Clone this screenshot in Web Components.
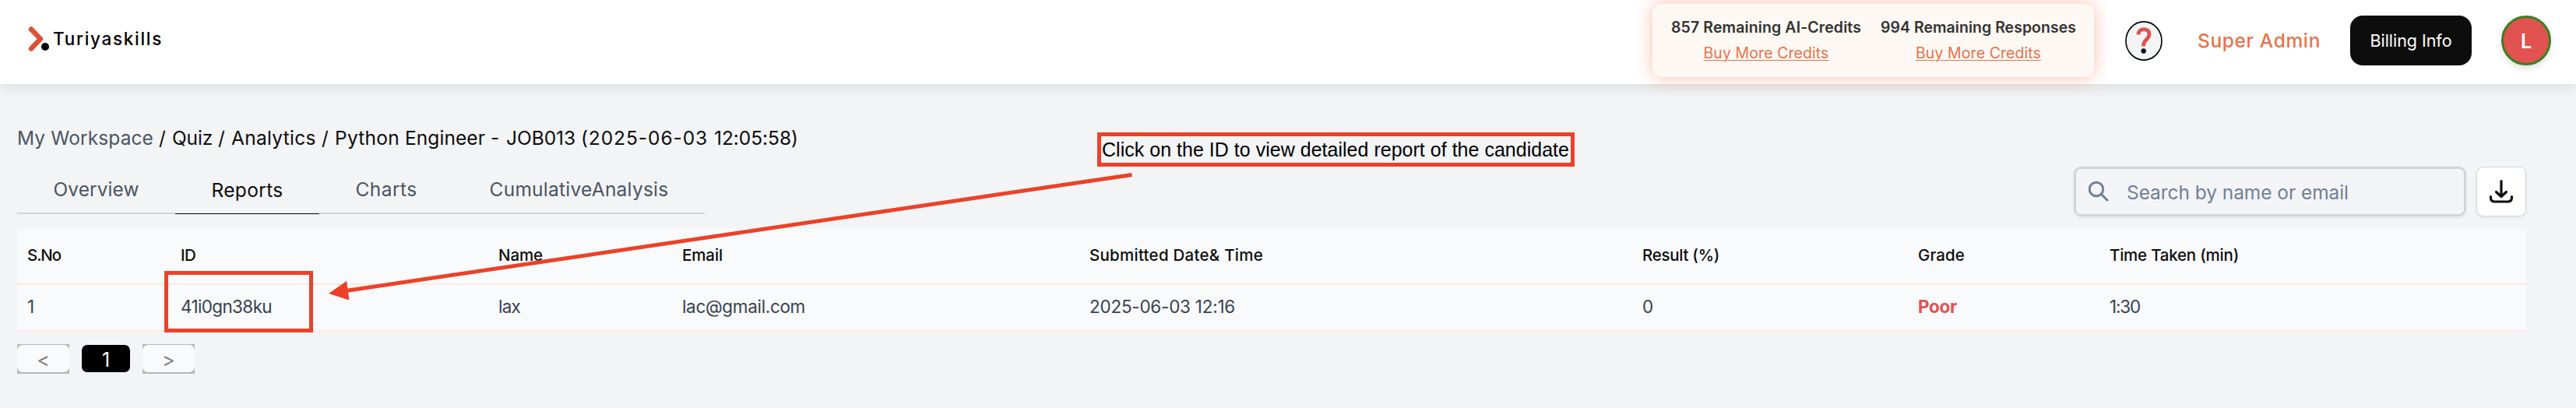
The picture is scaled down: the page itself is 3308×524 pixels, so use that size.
<!DOCTYPE html>
<html lang="en">
<head>
<meta charset="UTF-8">
<title>Turiyaskills</title>
<style>
    body {
        margin: 0;
        background: #f3f4f6;
        font-family: Inter, "Open Sans", sans-serif;
        color: #0d0d0d;
    }
</style>
</head>
<body>
<quiz-app></quiz-app>
<script>
// Text that is tracked so it takes exactly the given width
class FitText extends HTMLElement {
    connectedCallback() {
        this.attachShadow({ mode: 'open' });
        this.shadowRoot.innerHTML = `
            <style>
                :host { display: block; flex: none; width: ${this.getAttribute('width')}px; }
                span { display: inline-block; vertical-align: top; white-space: pre; text-decoration: inherit; }
            </style>
            <span><slot></slot></span>
        `;
        const span = this.shadowRoot.querySelector('span');
        const count = this.textContent.length;
        const diff = Number(this.getAttribute('width')) - span.getBoundingClientRect().width;
        if (count > 1) span.style.letterSpacing = (diff / count) + 'px';
    }
}

class AppLogo extends HTMLElement {
    connectedCallback() {
        this.attachShadow({ mode: 'open' });
        this.shadowRoot.innerHTML = `
            <style>
                :host { display: flex; align-items: center; gap: 4px; padding-left: 36px; font-size: 22.5px; font-weight: 500; color: #000; }
                svg { display: block; margin-top: -8px; }
                fit-text { margin-top: -8px; line-height: 30px; }
            </style>
            <svg width="28" height="34" viewBox="0 0 28 34">
                <path d="M4 4.5 L16 17 L4 29.5" fill="none" stroke="#de5034" stroke-width="6.4" stroke-linecap="round" stroke-linejoin="round"/>
                <circle cx="22" cy="27" r="5" fill="#000"/>
            </svg>
            <fit-text width="141">Turiyaskills</fit-text>
        `;
    }
}

class CreditsCard extends HTMLElement {
    connectedCallback() {
        this.attachShadow({ mode: 'open' });
        this.shadowRoot.innerHTML = `
            <style>
                :host {
                    display: flex; box-sizing: border-box; width: 567px; height: 94px; padding: 14px 24px 0; gap: 25px;
                    border-radius: 12px; background: #fef8f4; box-shadow: 0 0 22px rgba(238, 108, 72, 0.45);
                    font-size: 19.5px; line-height: 33px;
                }
                div { display: flex; flex-direction: column; align-items: center; }
                .count { font-weight: 600; color: #333; }
                .buy { color: #e8734a; text-decoration: underline; text-underline-offset: 2px; text-decoration-thickness: 1px; }
            </style>
            <div>
                <fit-text class="count" width="244">857 Remaining AI-Credits</fit-text>
                <fit-text class="buy" width="161">Buy More Credits</fit-text>
            </div>
            <div>
                <fit-text class="count" width="251">994 Remaining Responses</fit-text>
                <fit-text class="buy" width="161">Buy More Credits</fit-text>
            </div>
        `;
    }
}

class AppHeader extends HTMLElement {
    connectedCallback() {
        this.attachShadow({ mode: 'open' });
        this.shadowRoot.innerHTML = `
            <style>
                :host {
                    display: flex; justify-content: space-between; align-items: center; box-sizing: border-box;
                    height: 108px; padding-right: 32px; background: #fff;
                    box-shadow: 0 4px 18px rgba(0, 0, 0, 0.1);
                }
                nav { display: flex; align-items: center; height: 104px; align-self: flex-start; }
                .help { display: block; margin-left: 39px; }
                .role { margin-left: 44px; font-size: 24.5px; font-weight: 500; color: #e8734a; }
                .billing {
                    display: flex; align-items: center; justify-content: center; width: 156px; height: 64px; margin-left: 38px;
                    border-radius: 16px; background: #0d0d0d; color: #fff; font-size: 21.5px;
                }
                .avatar {
                    display: flex; align-items: center; justify-content: center; box-sizing: border-box; width: 64px; height: 64px;
                    margin-left: 38px; padding-top: 2px; border: 3px solid #3a8020; border-radius: 50%; background: #e05350; color: #fff;
                    font-size: 25px; font-weight: 600; box-shadow: 0 4px 8px rgba(0, 0, 0, 0.12);
                }
            </style>
            <app-logo></app-logo>
            <nav>
                <credits-card></credits-card>
                <svg class="help" width="50" height="53" viewBox="0 0 50 53">
                    <ellipse cx="25" cy="26.5" rx="23" ry="24.6" fill="#f3f4f6" stroke="#000" stroke-width="1.6"/>
                    <path d="M18 18.500 C18 9.500 32 9.500 32 18 C32 25 24.500 24 24.500 33.500" fill="none" stroke="#e05350" stroke-width="4.800"/>
                    <circle cx="24.700" cy="39.500" r="3.200" fill="#111"/>
                </svg>
                <fit-text class="role" width="158">Super Admin</fit-text>
                <div class="billing"><fit-text width="105">Billing Info</fit-text></div>
                <div class="avatar">L</div>
            </nav>
        `;
    }
}

class BreadCrumb extends HTMLElement {
    connectedCallback() {
        this.attachShadow({ mode: 'open' });
        this.shadowRoot.innerHTML = `
            <style>
                :host { display: flex; padding-top: 53px; font-size: 24.5px; line-height: 32px; }
                .root { color: #4b5563; }
            </style>
            <fit-text class="root" width="182">My Workspace </fit-text>
            <fit-text width="17">/ </fit-text>
            <fit-text width="59">Quiz </fit-text>
            <fit-text width="17">/ </fit-text>
            <fit-text width="116">Analytics </fit-text>
            <fit-text width="17">/ </fit-text>
            <fit-text width="90">Python </fit-text>
            <fit-text width="110">Engineer </fit-text>
            <fit-text width="20">- </fit-text>
            <fit-text width="96">JOB013 </fit-text>
            <fit-text width="171">(2025-06-03 </fit-text>
            <fit-text width="108">12:05:58)</fit-text>
        `;
    }
}

class TabBar extends HTMLElement {
    connectedCallback() {
        this.attachShadow({ mode: 'open' });
        this.shadowRoot.innerHTML = `
            <style>
                :host { display: flex; width: 883px; font-size: 24.5px; line-height: 32px; color: #4b5563; }
                div { display: flex; justify-content: center; box-sizing: border-box; height: 63px; padding-top: 15px; border-bottom: 2px solid #d1d5db; }
                .active { padding-top: 16px; border-bottom: 1px solid #000; color: #0d0d0d; }
            </style>
            <div style="width: 203px"><fit-text width="110">Overview</fit-text></div>
            <div class="active" style="width: 185px"><fit-text width="92">Reports</fit-text></div>
            <div style="width: 172px"><fit-text width="79">Charts</fit-text></div>
            <div style="width: 323px"><fit-text width="230">CumulativeAnalysis</fit-text></div>
        `;
    }
}

class SearchTools extends HTMLElement {
    connectedCallback() {
        this.attachShadow({ mode: 'open' });
        this.shadowRoot.innerHTML = `
            <style>
                :host { display: flex; gap: 13px; height: 64px; margin-top: 2px; }
                .field {
                    display: flex; align-items: center; box-sizing: border-box; width: 504px; padding-left: 16px;
                    border: 3px solid #d1d5db; border-radius: 9px; font-size: 24.5px; color: #718096;
                    box-shadow: 0 2px 4px rgba(0, 0, 0, 0.05);
                }
                .field svg { margin-right: 21px; }
                .field fit-text { margin-top: 2px; }
                .download {
                    display: flex; align-items: center; justify-content: center; box-sizing: border-box; width: 64px;
                    border: 1px solid #d1d5db; border-radius: 9px; background: #fff; box-shadow: 0 2px 4px rgba(0, 0, 0, 0.06);
                }
            </style>
            <div class="field">
                <svg width="28" height="28" viewBox="0 0 28 28" fill="none" stroke="#718096" stroke-width="3" stroke-linecap="round">
                    <circle cx="10" cy="11" r="8.800"/>
                    <path d="M16.500 17.500 L24 25"/>
                </svg>
                <fit-text width="285">Search by name or email</fit-text>
            </div>
            <div class="download">
                <svg width="32" height="32" viewBox="0 0 32 32" fill="none" stroke="#0d0d0d" stroke-width="3.200" stroke-linecap="round" stroke-linejoin="round">
                    <path d="M16 2.500 V22 M9.500 16.500 L16 22.500 L22.500 16.500"/>
                    <path d="M2.500 22.500 V24 Q2.500 29 8 29 H24 Q29.500 29 29.500 24 V22.500"/>
                </svg>
            </div>
        `;
    }
}

class ReportTable extends HTMLElement {
    connectedCallback() {
        this.attachShadow({ mode: 'open' });
        this.shadowRoot.innerHTML = `
            <style>
                :host { display: block; width: 3222px; margin-top: 16px; background: #f9fafc; }
                .row {
                    display: grid; grid-template-columns: 197px 408px 236px 523px 710px 354px 246px 1fr; align-items: center;
                    box-sizing: border-box; padding-left: 13px; border-bottom: 2px solid #fdeae6;
                }
                .head { height: 72px; padding-bottom: 4px; font-size: 20.5px; font-weight: 500; color: #0d0d0d; }
                .body { height: 60px; padding-bottom: 3px; font-size: 22.5px; color: #374151; }
                .poor { font-weight: 700; color: #e05350; }
            </style>
            <div class="row head">
                <fit-text width="43">S.No</fit-text>
                <fit-text width="19">ID</fit-text>
                <fit-text width="57">Name</fit-text>
                <fit-text width="52">Email</fit-text>
                <fit-text width="223">Submitted Date&amp; Time</fit-text>
                <fit-text width="99">Result (%)</fit-text>
                <fit-text width="60">Grade</fit-text>
                <fit-text width="166">Time Taken (min)</fit-text>
            </div>
            <div class="row body">
                <fit-text width="8">1</fit-text>
                <fit-text width="117">41i0gn38ku</fit-text>
                <fit-text width="28">lax</fit-text>
                <fit-text width="158">lac@gmail.com</fit-text>
                <fit-text width="187">2025-06-03 12:16</fit-text>
                <fit-text width="16">0</fit-text>
                <fit-text class="poor" width="50">Poor</fit-text>
                <fit-text width="39">1:30</fit-text>
            </div>
        `;
    }
}

class PageNav extends HTMLElement {
    connectedCallback() {
        this.attachShadow({ mode: 'open' });
        this.shadowRoot.innerHTML = `
            <style>
                :host { display: flex; gap: 16px; margin-top: 16px; font-size: 25px; }
                div { box-sizing: border-box; height: 38px; }
                .step { width: 67px; padding: 1px 0 2px; background: #b7b8ba; }
                span { display: flex; align-items: center; justify-content: center; height: 35px; padding-top: 3px; box-sizing: border-box; border-radius: 7px; }
                .step span { background: #f9fafc; color: #808080; }
                .current { width: 62px; padding-top: 1px; }
                .current span { background: #000; color: #fff; }
            </style>
            <div class="step"><span>&lt;</span></div>
            <div class="current"><span>1</span></div>
            <div class="step"><span>&gt;</span></div>
        `;
    }
}

// Callout drawn over the page: note, arrow and frame around the candidate ID
class GuideOverlay extends HTMLElement {
    connectedCallback() {
        this.attachShadow({ mode: 'open' });
        this.shadowRoot.innerHTML = `
            <style>
                :host { position: absolute; left: 0; top: 0; width: 3308px; height: 524px; }
                svg { display: block; }
                .note {
                    position: absolute; left: 1409px; top: 170px; box-sizing: border-box; width: 613px; height: 44px;
                    padding-left: 1px; border: 5px solid #ec4127; font: 25px/34px "Liberation Sans", Arial, sans-serif; color: #000;
                }
            </style>
            <svg width="3308" height="524">
                <rect x="213.5" y="350.500" width="186" height="74" fill="none" stroke="#ec4127" stroke-width="5"/>
                <path d="M1453.500 224.500 L444 373.500" stroke="#ec4127" stroke-width="5"/>
                <path d="M422 377 L445 361 L448.500 385.500 Z" fill="#ec4127"/>
            </svg>
            <div class="note"><fit-text width="600">Click on the ID to view detailed report of the candidate</fit-text></div>
        `;
    }
}

class QuizApp extends HTMLElement {
    connectedCallback() {
        this.attachShadow({ mode: 'open' });
        this.shadowRoot.innerHTML = `
            <style>
                :host { display: block; position: relative; height: 524px; overflow: hidden; }
                main { padding-left: 22px; }
                .bar { display: flex; justify-content: space-between; width: 3222px; height: 66px; margin-top: 19px; }
            </style>
            <app-header></app-header>
            <main>
                <bread-crumb></bread-crumb>
                <div class="bar">
                    <tab-bar></tab-bar>
                    <search-tools></search-tools>
                </div>
                <report-table></report-table>
                <page-nav></page-nav>
            </main>
            <guide-overlay></guide-overlay>
        `;
    }
}

customElements.define('fit-text', FitText);
customElements.define('app-logo', AppLogo);
customElements.define('credits-card', CreditsCard);
customElements.define('app-header', AppHeader);
customElements.define('bread-crumb', BreadCrumb);
customElements.define('tab-bar', TabBar);
customElements.define('search-tools', SearchTools);
customElements.define('report-table', ReportTable);
customElements.define('page-nav', PageNav);
customElements.define('guide-overlay', GuideOverlay);
customElements.define('quiz-app', QuizApp);
</script>
</body>
</html>
